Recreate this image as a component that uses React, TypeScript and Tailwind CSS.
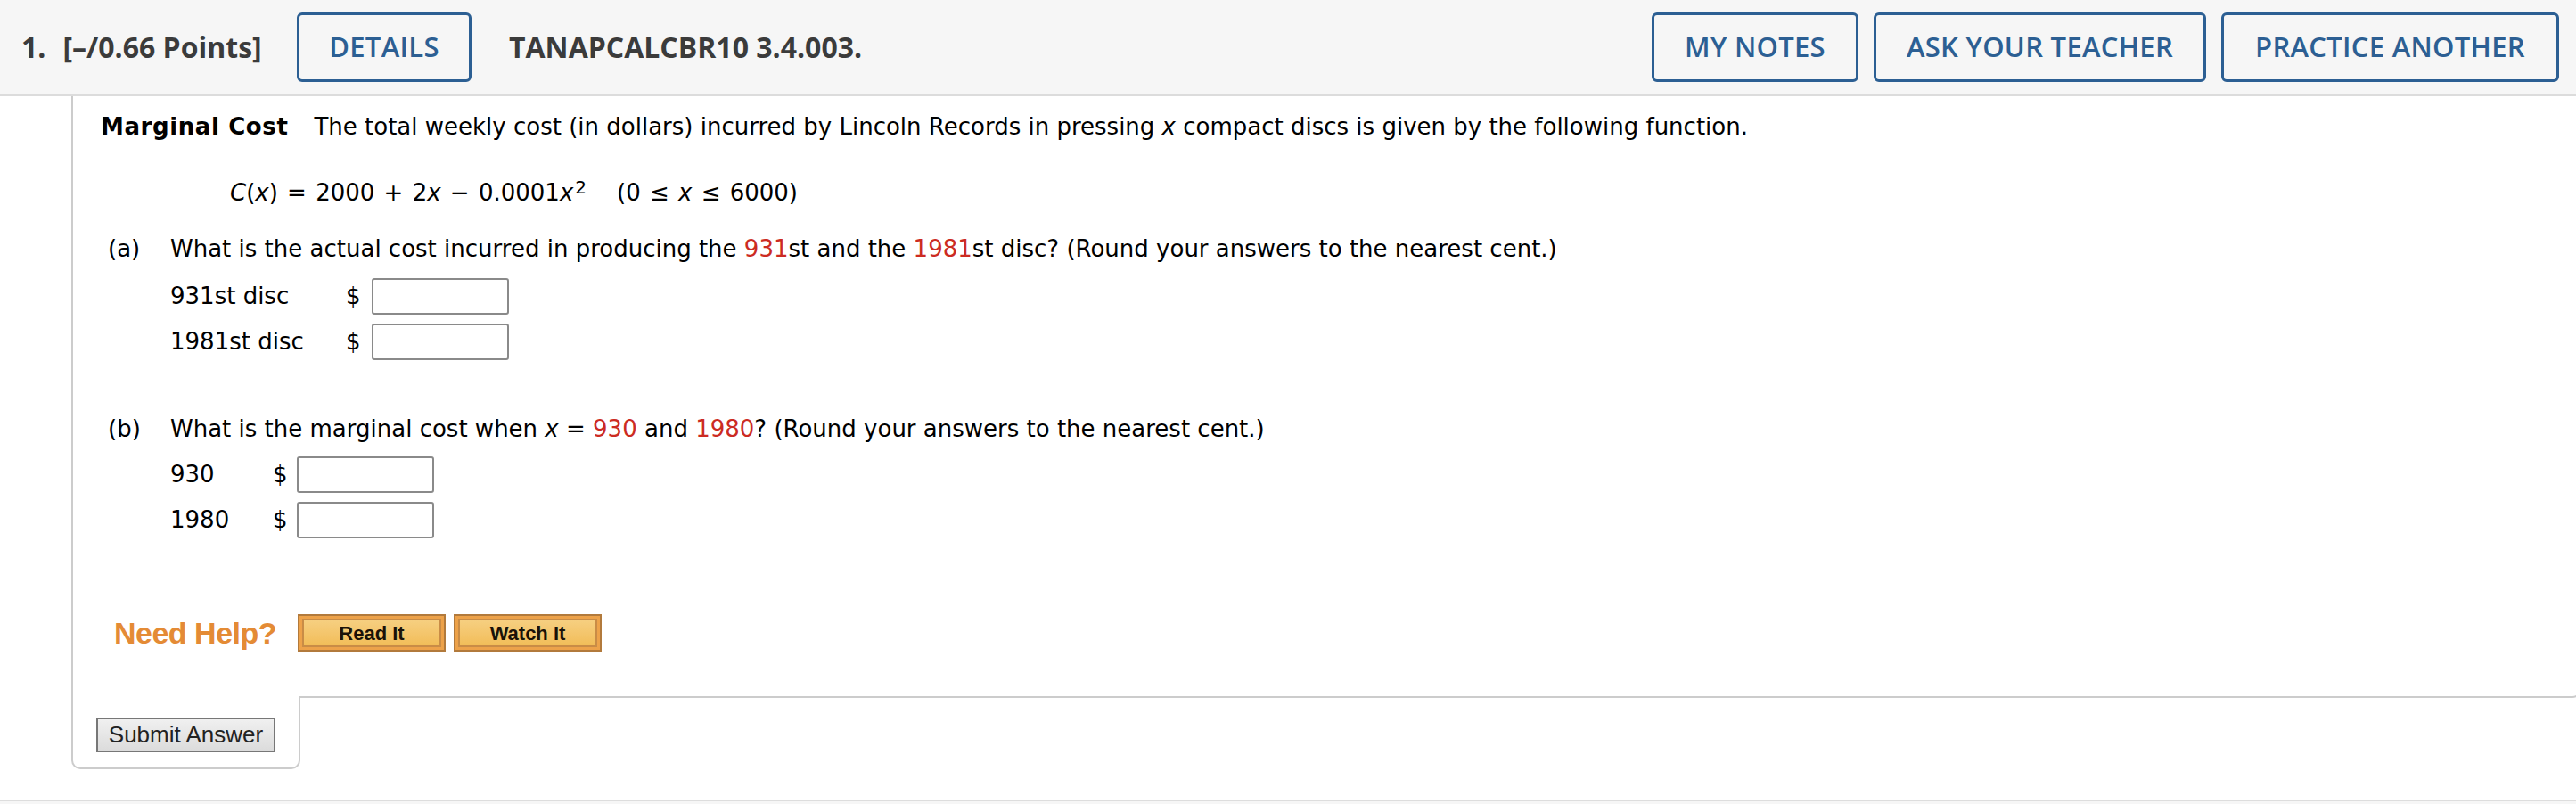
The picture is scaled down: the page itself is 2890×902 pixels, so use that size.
import React from "react";

const body = "font-['DejaVu_Sans',Verdana,sans-serif]";

const HeaderButton = ({ label, width }: { label: string; width: string }) => (
    <div
        className={`${width} h-[78px] flex items-center justify-center rounded-[6px] border-[3px] border-[#2c5f93] bg-[#f6f6f6] text-[#2c5f93] text-[31px] font-semibold tracking-[0.3px]`}
    >
        {label}
    </div>
);

const AnswerBox = () => <div className="w-[154px] h-[41px] rounded-[3px] border-2 border-[#8a8a8a] bg-white" />;

const Red = ({ children }: { children: React.ReactNode }) => <span className="text-[#cc2b22]">{children}</span>;

const HelpButton = ({ label }: { label: string }) => (
    <div className="w-[166px] h-[42px] p-[3px] bg-[#eda24a] border-2 border-[#b27a3c]">
        <div className="h-full flex items-center justify-center border-2 border-[#c98c46] bg-gradient-to-b from-[#f6cf80] to-[#f2bd58] text-[22px] font-bold text-[#1a1208] font-['Liberation_Sans',Arial,sans-serif]">
            {label}
        </div>
    </div>
);

const App = () => {
    return (
        <div className="w-[2890px] h-[902px] bg-white overflow-hidden flex flex-col">
            {/* header bar */}
            <div className="h-[108px] shrink-0 bg-[#f6f6f6] border-b-[3px] border-[#dcdcdc] flex items-center pl-[24px] pr-[19px] font-['Open_Sans',sans-serif] text-[#3b3b3b]">
                <div className="text-[32px] font-bold w-[309px] flex">
                    <span>1.</span>
                    <span className="ml-[19px]">[–/0.66 Points]</span>
                </div>
                <HeaderButton label="DETAILS" width="w-[196px]" />
                <div className="text-[32px] font-bold ml-[42px]">TANAPCALCBR10 3.4.003.</div>
                <div className="ml-auto flex gap-[17px]">
                    <HeaderButton label="MY NOTES" width="w-[232px]" />
                    <HeaderButton label="ASK YOUR TEACHER" width="w-[373px]" />
                    <HeaderButton label="PRACTICE ANOTHER" width="w-[379px]" />
                </div>
            </div>

            <div className={`pl-[80px] flex-1 flex flex-col ${body} text-[26px] text-black`}>
                {/* question box */}
                <div className="mr-[-6px] border-l-2 border-r-2 border-b-2 border-[#cccccc] rounded-br-[10px] pl-[31px] pt-[14px] h-[675px]">
                    <div className="h-[40px] flex items-center">
                        <span className="font-bold tracking-[0.6px]">Marginal Cost</span>
                        <span className="ml-[29px]">
                            The total weekly cost (in dollars) incurred by Lincoln Records in pressing <i>x</i> compact discs is given by the following function.
                        </span>
                    </div>
                    <div className="h-[40px] mt-[34px] flex items-center pl-[145px] [word-spacing:2px]">
                        <span className="whitespace-pre">
                            <i>C</i>(<i>x</i>) = 2000 + 2<i>x</i> − 0.0001<i>x</i>
                            <sup className="text-[20px] leading-none relative -top-[8px] ml-[2px]">2</sup>
                        </span>
                        <span className="ml-[34px]">(0 ≤ <i>x</i> ≤ 6000)</span>
                    </div>

                    <div className="h-[40px] mt-[23px] flex items-center pl-[8px]">
                        <span className="w-[70px]">(a)</span>
                        <span>
                            What is the actual cost incurred in producing the <Red>931</Red>st and the <Red>1981</Red>st disc? (Round your answers to the nearest cent.)
                        </span>
                    </div>
                    <div className="pl-[78px] mt-[13px] flex flex-col gap-[10px]">
                        <div className="flex items-center h-[41px]">
                            <span className="w-[197px]">931st disc</span>
                            <span className="w-[29px]">$</span>
                            <AnswerBox />
                        </div>
                        <div className="flex items-center h-[41px]">
                            <span className="w-[197px]">1981st disc</span>
                            <span className="w-[29px]">$</span>
                            <AnswerBox />
                        </div>
                    </div>

                    <div className="h-[40px] mt-[57px] flex items-center pl-[8px]">
                        <span className="w-[70px]">(b)</span>
                        <span>
                            What is the marginal cost when <i>x</i> = <Red>930</Red> and <Red>1980</Red>? (Round your answers to the nearest cent.)
                        </span>
                    </div>
                    <div className="pl-[78px] mt-[11px] flex flex-col gap-[10px]">
                        <div className="flex items-center h-[41px]">
                            <span className="w-[115px]">930</span>
                            <span className="w-[27px]">$</span>
                            <AnswerBox />
                        </div>
                        <div className="flex items-center h-[41px]">
                            <span className="w-[115px]">1980</span>
                            <span className="w-[27px]">$</span>
                            <AnswerBox />
                        </div>
                    </div>

                    <div className="mt-[85px] flex items-center pl-[15px] h-[42px]">
                        <span className="w-[206px] text-[34px] font-bold text-[#e48b35] font-['Liberation_Sans',Arial,sans-serif] tracking-[-0.5px]">
                            Need Help?
                        </span>
                        <div className="flex gap-[9px]">
                            <HelpButton label="Read It" />
                            <HelpButton label="Watch It" />
                        </div>
                    </div>
                </div>

                {/* submit tab */}
                <div className="-mt-[2px] w-[257px] h-[82px] bg-white border-l-2 border-r-2 border-b-2 border-[#cccccc] rounded-b-[10px] pl-[26px] pt-[24px]">
                    <div className="w-[201px] h-[39px] flex items-center justify-center border-2 border-[#777777] bg-gradient-to-b from-[#f0f0f0] to-[#dcdcdc] text-[26px] text-[#222] font-['Liberation_Sans',Arial,sans-serif]">
                        Submit Answer
                    </div>
                </div>

                <div className="mt-auto ml-[-80px] h-[5px] border-t-2 border-[#dddddd] bg-[#f6f6f6]" />
            </div>
        </div>
    );
};

export default App;
